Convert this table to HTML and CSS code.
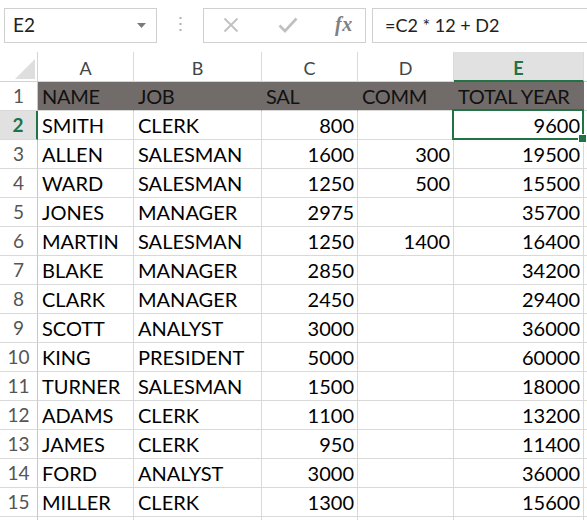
FILE: index.html
```html
<!DOCTYPE html>
<html>
<head>
<meta charset="utf-8">
<link rel="stylesheet" href="styles.css">
</head>
<body>
<div class="app">
  <div class="toolbar">
    <div class="namebox">
      <span class="name">E2</span>
      <svg class="dd" width="9" height="5" viewBox="0 0 9 5"><path d="M0 0 L9 0 L4.5 5 Z" fill="#7a7a7a"/></svg>
    </div>
    <div class="dots">
      <svg width="3" height="14" viewBox="0 0 3 14"><rect x="0.5" y="0" width="2" height="2" fill="#b0b0b0"/><rect x="0.5" y="6" width="2" height="2" fill="#b0b0b0"/><rect x="0.5" y="12" width="2" height="2" fill="#b0b0b0"/></svg>
    </div>
    <div class="fnbtns">
      <svg class="ic-x" width="16" height="16" viewBox="0 0 16 16"><path d="M1.5 1.5 L14.5 14.5 M14.5 1.5 L1.5 14.5" stroke="#c0c0c0" stroke-width="1.8" fill="none"/></svg>
      <svg class="ic-ok" width="20" height="16" viewBox="0 0 20 16"><path d="M1.5 8.5 L7 14 L18.5 1.5" stroke="#c0c0c0" stroke-width="2.6" fill="none"/></svg>
      <span class="fx">fx</span>
    </div>
    <div class="formula">=C2 * 12 + D2</div>
  </div>

  <div class="sheet">
    <div class="corner"><span class="tri"></span></div>
    <div class="ch">A</div>
    <div class="ch">B</div>
    <div class="ch">C</div>
    <div class="ch">D</div>
    <div class="ch sel">E</div>
    <div class="ch last"></div>

    <div class="rh">1</div>
    <div class="c hd">NAME</div><div class="c hd">JOB</div><div class="c hd">SAL</div><div class="c hd">COMM</div><div class="c hd">TOTAL YEAR</div><div class="c last"></div>

    <div class="rh sel">2</div>
    <div class="c">SMITH</div><div class="c">CLERK</div><div class="c n">800</div><div class="c n"></div><div class="c n active">9600</div><div class="c last"></div>

    <div class="rh">3</div>
    <div class="c">ALLEN</div><div class="c">SALESMAN</div><div class="c n">1600</div><div class="c n">300</div><div class="c n">19500</div><div class="c last"></div>

    <div class="rh">4</div>
    <div class="c">WARD</div><div class="c">SALESMAN</div><div class="c n">1250</div><div class="c n">500</div><div class="c n">15500</div><div class="c last"></div>

    <div class="rh">5</div>
    <div class="c">JONES</div><div class="c">MANAGER</div><div class="c n">2975</div><div class="c n"></div><div class="c n">35700</div><div class="c last"></div>

    <div class="rh">6</div>
    <div class="c">MARTIN</div><div class="c">SALESMAN</div><div class="c n">1250</div><div class="c n">1400</div><div class="c n">16400</div><div class="c last"></div>

    <div class="rh">7</div>
    <div class="c">BLAKE</div><div class="c">MANAGER</div><div class="c n">2850</div><div class="c n"></div><div class="c n">34200</div><div class="c last"></div>

    <div class="rh">8</div>
    <div class="c">CLARK</div><div class="c">MANAGER</div><div class="c n">2450</div><div class="c n"></div><div class="c n">29400</div><div class="c last"></div>

    <div class="rh">9</div>
    <div class="c">SCOTT</div><div class="c">ANALYST</div><div class="c n">3000</div><div class="c n"></div><div class="c n">36000</div><div class="c last"></div>

    <div class="rh">10</div>
    <div class="c">KING</div><div class="c">PRESIDENT</div><div class="c n">5000</div><div class="c n"></div><div class="c n">60000</div><div class="c last"></div>

    <div class="rh">11</div>
    <div class="c">TURNER</div><div class="c">SALESMAN</div><div class="c n">1500</div><div class="c n"></div><div class="c n">18000</div><div class="c last"></div>

    <div class="rh">12</div>
    <div class="c">ADAMS</div><div class="c">CLERK</div><div class="c n">1100</div><div class="c n"></div><div class="c n">13200</div><div class="c last"></div>

    <div class="rh">13</div>
    <div class="c">JAMES</div><div class="c">CLERK</div><div class="c n">950</div><div class="c n"></div><div class="c n">11400</div><div class="c last"></div>

    <div class="rh">14</div>
    <div class="c">FORD</div><div class="c">ANALYST</div><div class="c n">3000</div><div class="c n"></div><div class="c n">36000</div><div class="c last"></div>

    <div class="rh">15</div>
    <div class="c">MILLER</div><div class="c">CLERK</div><div class="c n">1300</div><div class="c n"></div><div class="c n">15600</div><div class="c last"></div>

    <div class="rh"></div>
    <div class="c"></div><div class="c"></div><div class="c"></div><div class="c"></div><div class="c"></div><div class="c last"></div>
  </div>
</div>
</body>
</html>
```

FILE: styles.css
```css
* { box-sizing: border-box; }
html, body { margin: 0; padding: 0; background: #fff; overflow: hidden; }
body { font-family: Lato, "Open Sans", sans-serif; color: #000; }
.app { width: 587px; height: 520px; overflow: hidden; }

.toolbar {
  display: flex;
  align-items: stretch;
  height: 52px;
  padding: 8px 0 9px 4px;
}
.namebox {
  width: 153px;
  border: 1px solid #d0d0d0;
  display: flex;
  align-items: center;
  justify-content: space-between;
  padding: 0 10px 2px 8px;
}
.namebox .name { font-size: 19px; color: #222; }
.namebox .dd { margin-top: 2px; }
.dots {
  width: 46px;
  display: flex;
  align-items: center;
  justify-content: center;
  padding-bottom: 3px;
}
.fnbtns {
  width: 163px;
  border: 1px solid #d0d0d0;
  display: flex;
  align-items: center;
  padding: 0 0 2px 19px;
}
.ic-x { margin-right: 39px; }
.ic-ok { margin-right: 37px; }
.fx {
  font-family: "Liberation Serif", "DejaVu Serif", serif;
  font-style: italic;
  font-weight: bold;
  font-size: 20px;
  color: #808080;
  letter-spacing: 0.5px;
}
.formula {
  flex: 1;
  margin-left: 6px;
  margin-right: -4px;
  border: 1px solid #d0d0d0;
  display: flex;
  align-items: center;
  padding: 0 0 2px 12px;
  font-size: 18px;
  color: #222;
}

.sheet {
  display: grid;
  grid-template-columns: 38px 96px 128px 96px 96px 130px 20px;
  grid-template-rows: 30px;
  grid-auto-rows: 29px;
}
.corner {
  position: relative;
  border-right: 1px solid #d4d4d4;
  border-bottom: 1px solid #d4d4d4;
}
.tri {
  position: absolute;
  left: 15px;
  top: 7px;
  width: 0;
  height: 0;
  border-left: 20px solid transparent;
  border-bottom: 20px solid #dedede;
}
.ch {
  border-right: 1px solid #dadada;
  border-bottom: 1px solid #d4d4d4;
  display: flex;
  align-items: center;
  justify-content: center;
  font-size: 18px;
  color: #444;
  padding-top: 2px;
}
.ch.sel {
  background: #e1e1e1;
  color: #217346;
  font-weight: bold;
  border-bottom: 2px solid #217346;
  padding-top: 3px;
}
.rh {
  border-right: 1px solid #c8c8c8;
  border-bottom: 1px solid #d9d9d9;
  display: flex;
  align-items: center;
  justify-content: center;
  font-size: 19px;
  color: #555;
  padding-bottom: 1px;
}
.rh.sel {
  background: #e1e1e1;
  color: #217346;
  font-weight: bold;
  border-right: 2px solid #217346;
}
.c {
  border-right: 1px solid #d9d9d9;
  border-bottom: 1px solid #d9d9d9;
  display: flex;
  align-items: center;
  padding: 0 4px 1px 4px;
  font-size: 20px;
  white-space: nowrap;
  overflow: visible;
  color: #000;
}
.c.n { justify-content: flex-end; padding-right: 3px; }
.c.hd {
  background: #716c6a;
  border-color: #716c6a;
  border-bottom-color: #d9d9d9;
  color: #111;
  letter-spacing: -0.3px;
}
.c.last { border-right: none; }
.c.active { position: relative; }
.c.active::after {
  content: "";
  position: absolute;
  left: -2px;
  top: -2px;
  right: -1px;
  bottom: -1px;
  border: 2px solid #217346;
}
.c.active::before {
  content: "";
  position: absolute;
  right: -4px;
  bottom: -4px;
  width: 7px;
  height: 7px;
  background: #217346;
  border: 1px solid #fff;
  z-index: 2;
}
```
